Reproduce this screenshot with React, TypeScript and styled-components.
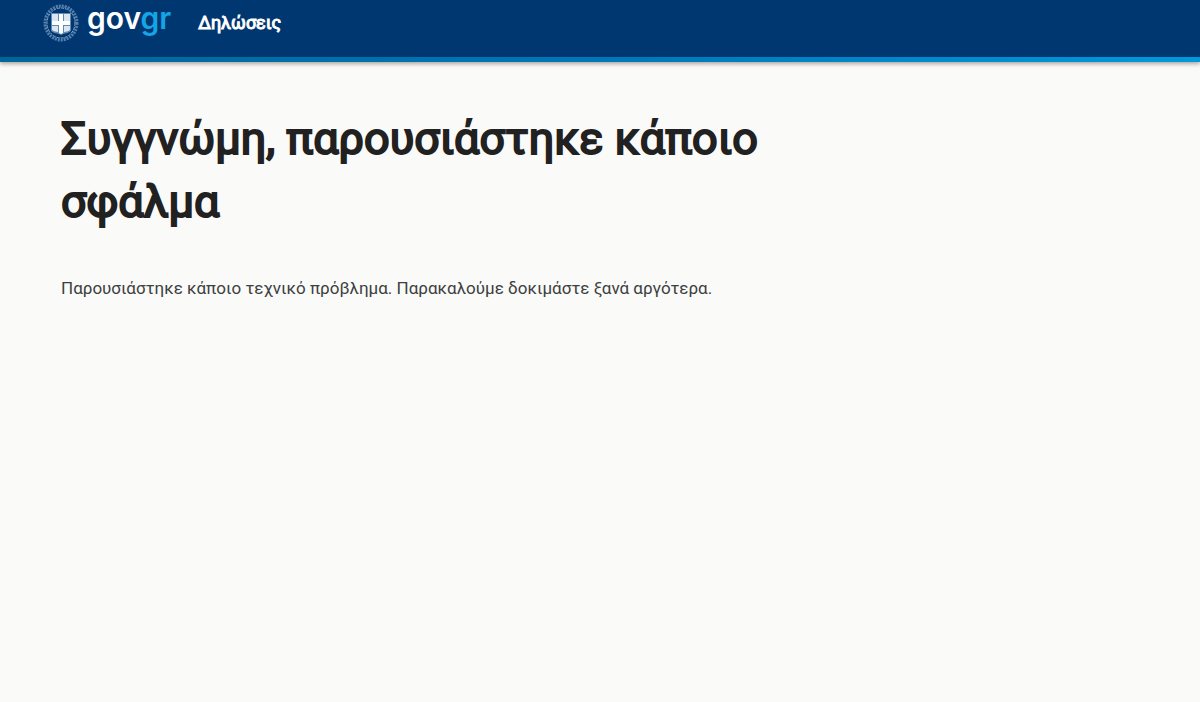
import React from "react";
import styled, { createGlobalStyle } from "styled-components";

const GlobalStyle = createGlobalStyle`
  * { box-sizing: border-box; }
  body {
    margin: 0;
    background: #fafaf8;
    color: #212529;
    font-family: Roboto, "Liberation Sans", sans-serif;
  }
`;

const Header = styled.header`
  display: flex;
  align-items: flex-start;
  height: 62px;
  padding: 0 43px;
  background: #003770;
  border-bottom: 5px solid transparent;
  border-image: linear-gradient(to right, #006699, #0077b8 50%, #0099dc) 1;
  box-shadow: 0 2px 4px rgba(60, 40, 30, 0.4);
`;

const HomeLink = styled.a`
  display: flex;
  align-items: flex-start;
  gap: 8px;
  color: #ffffff;
  text-decoration: none;
`;

const Wordmark = styled.span`
  font-family: Inter, sans-serif;
  font-size: 30px;
  font-weight: 600;
  line-height: 36px;
`;

const WordmarkAccent = styled.span`
  color: #14a5e6;
`;

const ServiceLink = styled.a`
  margin-left: 27px;
  color: #ffffff;
  font-size: 18px;
  font-weight: 400;
  -webkit-text-stroke: 1px #ffffff;
  line-height: 46px;
  text-decoration: none;
`;

const Main = styled.main`
  max-width: 840px;
  padding: 45px 61px;
`;

const Title = styled.h1`
  margin: 0;
  color: #212121;
  font-size: 45px;
  font-weight: 400;
  -webkit-text-stroke: 2px #212121;
  line-height: 63px;
`;

const Message = styled.p`
  margin: 41px 0 0;
  color: #3c403f;
  font-size: 17px;
  line-height: 28px;
`;

function Emblem() {
  return (
    <svg width="36" height="46" viewBox="0 -4 36 46" aria-hidden="true">
      <ellipse cx="18" cy="19" rx="16" ry="17" fill="none" stroke="#5480ae" strokeWidth="3" strokeDasharray="2 1" />
      <ellipse cx="18" cy="19" rx="14" ry="15" fill="none" stroke="#86a7c8" strokeWidth="1" strokeDasharray="3 1" />
      <path d="M8 9h20v17c0 3-6 3-10 5-4-2-10-2-10-5z" fill="#5f8ab5" />
      <path d="M9 10h6v7H9zM21 10h6v7h-6zM9 22h6v6c-4-1-6-1-6-3zM21 22h6v3c0 2-2 2-6 3z" fill="#d9e5f0" />
      <path d="M16 10h4v7h7v4h-7v8l-2 1-2-1v-8H9v-4h7z" fill="#ffffff" />
    </svg>
  );
}

export default function App() {
  return (
    <>
      <GlobalStyle />
      <Header>
        <HomeLink href="/" aria-label="govgr">
          <Emblem />
          <Wordmark>
            gov<WordmarkAccent>gr</WordmarkAccent>
          </Wordmark>
        </HomeLink>
        <ServiceLink href="/">Δηλώσεις</ServiceLink>
      </Header>
      <Main>
        <Title>Συγγνώμη, παρουσιάστηκε κάποιο σφάλμα</Title>
        <Message>
          Παρουσιάστηκε κάποιο τεχνικό πρόβλημα. Παρακαλούμε δοκιμάστε ξανά αργότερα.
        </Message>
      </Main>
    </>
  );
}
